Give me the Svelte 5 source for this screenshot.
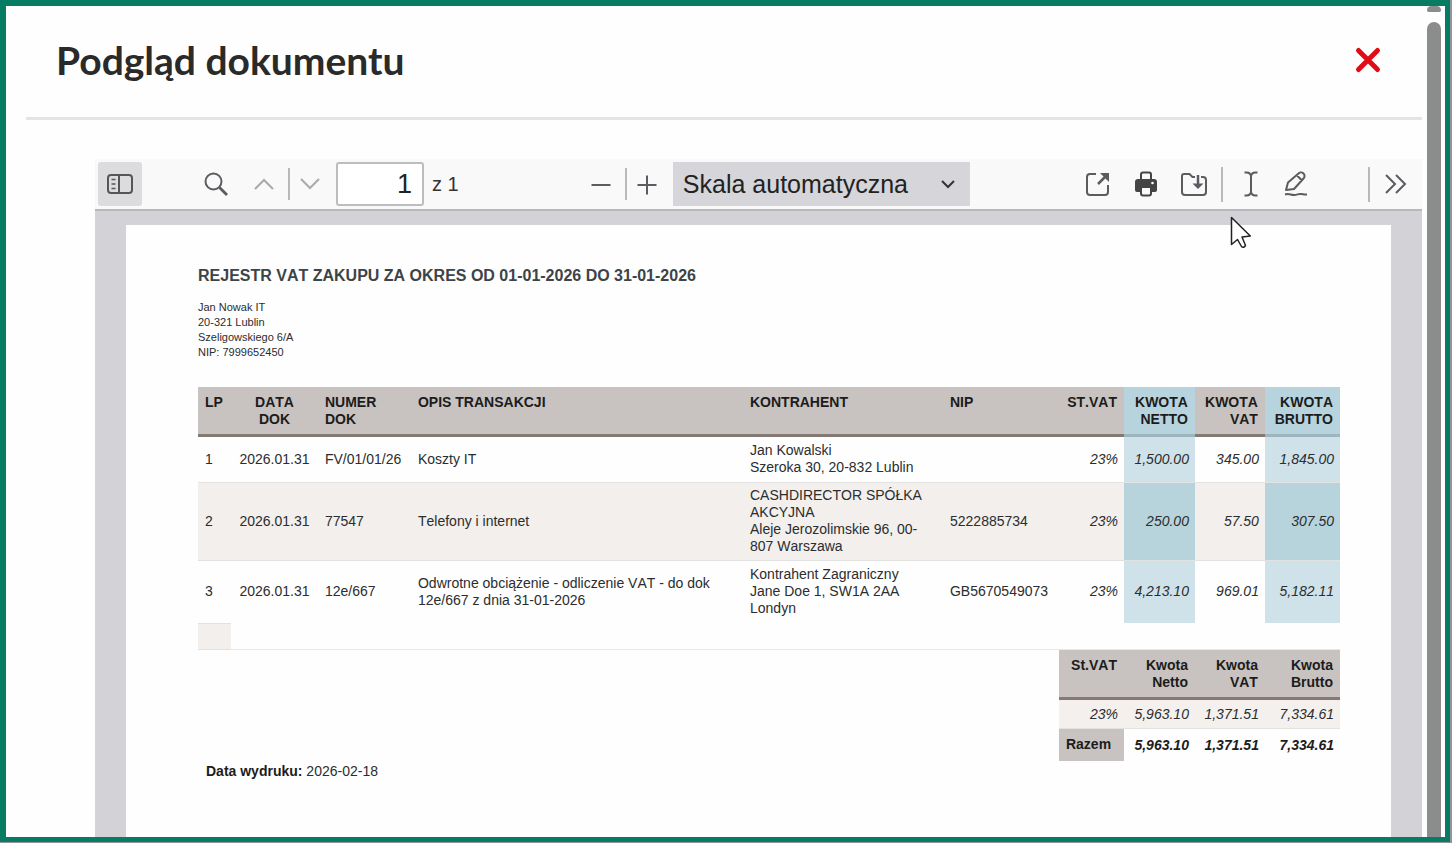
<script lang="ts">
  const rows = [
    { lp: 1, data: '2026.01.31', numer: 'FV/01/01/26', opis: 'Koszty IT', kontrahent: 'Jan Kowalski', adres: 'Szeroka 30, 20-832 Lublin', nip: '', stawka: '23%', netto: '1,500.00', vat: '345.00', brutto: '1,845.00' },
    { lp: 2, data: '2026.01.31', numer: '77547', opis: 'Telefony i internet', kontrahent: 'CASHDIRECTOR SPÓŁKA AKCYJNA', adres: 'Aleje Jerozolimskie 96, 00-807 Warszawa', nip: '5222885734', stawka: '23%', netto: '250.00', vat: '57.50', brutto: '307.50' },
    { lp: 3, data: '2026.01.31', numer: '12e/667', opis: 'Odwrotne obciążenie - odliczenie VAT - do dok 12e/667 z dnia 31-01-2026', kontrahent: 'Kontrahent Zagraniczny', adres: 'Jane Doe 1, SW1A 2AA Londyn', nip: 'GB5670549073', stawka: '23%', netto: '4,213.10', vat: '969.01', brutto: '5,182.11' },
  ];

  // column proportions of the register
  const cols = [33, 87, 93, 332, 200, 116, 65, 71, 70, 75];
  const total = cols.reduce((a, b) => a + b, 0);

  let strona = $state('1');
  let skala = $state('auto');
</script>

<div class="shell">
  <div class="modal" role="dialog" aria-labelledby="modal-title">
    <div class="modal__content">
      <header class="modal__header">
        <h1 id="modal-title">Podgląd dokumentu</h1>
        <button class="close" aria-label="Zamknij">
          <svg width="28" height="28" viewBox="0 0 28 28" fill="none" stroke="#e00d17" stroke-width="5" stroke-linecap="round"><path d="M4.500 4.500 23.500 23.500M23.500 4.500 4.500 23.500"/></svg>
        </button>
      </header>

      <div class="viewer">
        <div class="toolbar">
          <div class="group group--left">
            <button class="tool tool--active" aria-label="Panel boczny">
              <svg width="28" height="28" viewBox="0 0 28 28" fill="none" stroke="#55555a" stroke-width="2"><rect x="2" y="5" width="24" height="18" rx="3"/><path d="M13 5v18"/><path d="M5.500 9.500h4M5.500 14h4M5.500 18.500h4" stroke-width="1.500"/></svg>
            </button>
            <button class="tool tool--search" aria-label="Znajdź">
              <svg width="28" height="28" viewBox="0 0 28 28" fill="none" stroke="#5c5c60" stroke-width="2"><circle cx="11.500" cy="11.500" r="8"/><path d="m17.500 17.500 7.500 7.500" stroke-width="2.800"/></svg>
            </button>
            <button class="tool tool--muted" aria-label="Poprzednia strona">
              <svg width="28" height="28" viewBox="0 0 28 28" fill="none" stroke="currentColor" stroke-width="2"><path d="m5 19 9-9 9 9"/></svg>
            </button>
            <span class="sep"></span>
            <button class="tool tool--muted" aria-label="Następna strona">
              <svg width="28" height="28" viewBox="0 0 28 28" fill="none" stroke="currentColor" stroke-width="2"><path d="m5 9 9 9 9-9"/></svg>
            </button>
            <input class="page-number" type="text" aria-label="Strona" bind:value={strona} />
            <span class="page-count">z 1</span>
          </div>

          <div class="group">
            <button class="tool" aria-label="Pomniejsz">
              <svg width="28" height="28" viewBox="0 0 28 28" fill="none" stroke="currentColor" stroke-width="2"><path d="M4.500 15h19"/></svg>
            </button>
            <span class="sep"></span>
            <button class="tool" aria-label="Powiększ">
              <svg width="28" height="28" viewBox="0 0 28 28" fill="none" stroke="currentColor" stroke-width="2"><path d="M4.500 15h19M14 5.500v19"/></svg>
            </button>
            <div class="scale">
              <select aria-label="Skala" bind:value={skala}>
                <option value="auto">Skala automatyczna</option>
              </select>
              <svg width="16" height="16" viewBox="0 0 16 16" fill="none" stroke="#333" stroke-width="2"><path d="m2 5 6 6 6-6"/></svg>
            </div>
          </div>

          <div class="group">
            <button class="tool" aria-label="Otwórz">
              <svg width="28" height="28" viewBox="0 0 28 28" fill="none" stroke="currentColor" stroke-width="2"><path d="M12 4H6a3 3 0 0 0-3 3v15a3 3 0 0 0 3 3h15a3 3 0 0 0 3-3v-7"/><path d="m14 14 8-8" stroke-width="2.500"/><path d="M16 3h9v9z" fill="currentColor" stroke="none"/></svg>
            </button>
            <button class="tool" aria-label="Drukuj">
              <svg width="28" height="28" viewBox="0 0 28 28"><path d="M9 10V4.500a2 2 0 0 1 2-2h6a2 2 0 0 1 2 2V10" fill="none" stroke="#444" stroke-width="2"/><path d="M6 9h16a3 3 0 0 1 3 3v8a2 2 0 0 1-2 2H5a2 2 0 0 1-2-2v-8a3 3 0 0 1 3-3z" fill="#444"/><path d="M9 17h10v6.500a2 2 0 0 1-2 2h-6a2 2 0 0 1-2-2z" fill="#fafafa" stroke="#444" stroke-width="2"/><circle cx="20.500" cy="13" r="1.300" fill="#fff"/></svg>
            </button>
            <button class="tool" aria-label="Zapisz">
              <svg width="28" height="28" viewBox="0 0 28 28" fill="none" stroke="currentColor" stroke-width="2"><path d="M21 7h2a3 3 0 0 1 3 3v12a3 3 0 0 1-3 3H5a3 3 0 0 1-3-3V6a2 2 0 0 1 2-2h5.500l3 3H15"/><path d="M18 5v9" stroke-width="2.500"/><path d="M12.500 13.500h11L18 19z" fill="currentColor" stroke="none"/></svg>
            </button>
            <span class="sep sep--wide"></span>
            <button class="tool tool--text" aria-label="Tekst">
              <svg width="28" height="28" viewBox="0 0 28 28" fill="none" stroke="currentColor" stroke-width="2"><path d="M14 5v18M7.500 2.500h2A4.500 4.500 0 0 1 14 6a4.500 4.500 0 0 1 4.500-3.500h2M7.500 25.500h2A4.500 4.500 0 0 0 14 22a4.500 4.500 0 0 0 4.500 3.500h2"/></svg>
            </button>
            <button class="tool" aria-label="Rysuj">
              <svg width="28" height="28" viewBox="0 0 28 28" fill="none" stroke="currentColor" stroke-width="2" stroke-linejoin="round"><path d="m4 20 2-7.500L16.500 3.500a3.500 3.500 0 0 1 5 5L12 19zM15 5.500l5 5"/><path d="M3 24.500c4-1.500 6 .8 9.500.5 3-.2 4-1.500 7-1 2 .3 3 .8 5.500.5"/></svg>
            </button>
            <span class="sep sep--more"></span>
            <button class="tool" aria-label="Więcej narzędzi">
              <svg width="28" height="28" viewBox="0 0 28 28" fill="none" stroke="currentColor" stroke-width="2"><path d="m4 5 9 9-9 9M14 5l9 9-9 9"/></svg>
            </button>
          </div>
        </div>

        <div class="canvas">
          <article class="page">
            <h2>REJESTR VAT ZAKUPU ZA OKRES OD 01-01-2026 DO 31-01-2026</h2>
            <address>
              Jan Nowak IT<br />
              20-321 Lublin<br />
              Szeligowskiego 6/A<br />
              NIP: 7999652450
            </address>

            <table>
              <colgroup>
                {#each cols as c}
                  <col style="width: {(c / total) * 100}%" />
                {/each}
              </colgroup>
              <thead>
                <tr>
                  <th>LP</th>
                  <th class="center">DATA<br />DOK</th>
                  <th>NUMER<br />DOK</th>
                  <th>OPIS TRANSAKCJI</th>
                  <th>KONTRAHENT</th>
                  <th>NIP</th>
                  <th class="right">ST.VAT</th>
                  <th class="right blue">KWOTA NETTO</th>
                  <th class="right">KWOTA VAT</th>
                  <th class="right blue">KWOTA BRUTTO</th>
                </tr>
              </thead>
              <tbody>
                {#each rows as row (row.lp)}
                  <tr>
                    <td>{row.lp}</td>
                    <td class="center">{row.data}</td>
                    <td>{row.numer}</td>
                    <td>{row.opis}</td>
                    <td>{row.kontrahent}<br />{row.adres}</td>
                    <td>{row.nip}</td>
                    <td class="num">{row.stawka}</td>
                    <td class="num blue">{row.netto}</td>
                    <td class="num">{row.vat}</td>
                    <td class="num blue">{row.brutto}</td>
                  </tr>
                {/each}
                <tr class="spacer">
                  <td></td>
                  <td colspan="9"></td>
                </tr>
              </tbody>
              <tfoot>
                <tr>
                  <td colspan="6"></td>
                  <th class="right">St.VAT</th>
                  <th class="right">Kwota<br />Netto</th>
                  <th class="right">Kwota<br />VAT</th>
                  <th class="right">Kwota<br />Brutto</th>
                </tr>
                <tr class="rate">
                  <td colspan="6"></td>
                  <td class="num">23%</td>
                  <td class="num">5,963.10</td>
                  <td class="num">1,371.51</td>
                  <td class="num">7,334.61</td>
                </tr>
                <tr class="sum">
                  <td colspan="6"></td>
                  <th>Razem</th>
                  <td class="num">5,963.10</td>
                  <td class="num">1,371.51</td>
                  <td class="num">7,334.61</td>
                </tr>
              </tfoot>
            </table>

            <p class="printed"><b>Data wydruku:</b> 2026-02-18</p>
          </article>
        </div>
      </div>
    </div>

    <div class="scrollbar" aria-hidden="true">
      <span class="scrollbar__arrow"></span>
      <span class="scrollbar__thumb"></span>
    </div>
  </div>

  <svg class="pointer" width="22" height="34" viewBox="0 0 22 34" aria-hidden="true"><path d="M1.500 1.500v27l6-5 4 7q2 2 4-1l-3.500-8.500 8.300-1z" fill="#fff" stroke="#222" stroke-width="1.500" stroke-linejoin="round"/></svg>
</div>

<style>
  :global(body) {
    margin: 0;
    background: #96919a;
  }

  .shell {
    position: relative;
    box-sizing: border-box;
    height: 100vh;
    padding: 0 2px 1px 0;
    overflow: hidden;
    font-family: "Liberation Sans", Arial, sans-serif;
    color: #2b2d2f;
  }
  .modal {
    box-sizing: border-box;
    display: flex;
    height: 100%;
    border: 5px solid #067d62;
    border-width: 6px 5px 5px 6px;
    background: #fefefe;
  }
  .modal__content {
    flex: 1;
    min-width: 0;
    display: flex;
    flex-direction: column;
  }

  .modal__header {
    display: flex;
    align-items: center;
    justify-content: space-between;
    height: 108px;
    margin-left: 20px;
    padding: 0 38px 3px 30px;
    border-bottom: 3px solid #e4e4e4;
  }
  h1 {
    margin: 0;
    font: 700 39px/48px Lato, sans-serif;
    color: #2a2a2a;
  }
  button {
    padding: 0;
    border: 0;
    background: none;
    cursor: pointer;
  }
  .close {
    width: 32px;
    height: 32px;
  }
  svg {
    display: block;
    margin: auto;
  }

  /* PDF viewer */
  .viewer {
    flex: 1;
    min-height: 0;
    display: flex;
    flex-direction: column;
    margin: 39px 0 0 89px;
  }
  .toolbar {
    display: flex;
    justify-content: space-between;
    align-items: center;
    height: 50px;
    padding: 0 4px 0 3px;
    background: #f9f9fa;
    border-bottom: 2px solid #b9b9bb;
  }
  .group {
    display: flex;
    align-items: center;
  }
  .group--left {
    padding-right: 14px;
  }
  .tool {
    width: 44px;
    height: 44px;
    margin-right: 4px;
    color: #5c5c60;
  }
  .tool:last-child {
    margin-right: 0;
  }
  .tool--active {
    background: #dcdcde;
    border-radius: 3px;
  }
  .tool--search {
    margin-left: 48px;
  }
  .tool--muted {
    color: #aaaaad;
  }
  .tool--text {
    margin-right: 1px;
  }
  .sep {
    width: 2px;
    height: 32px;
    margin: 0 -2px 0 -2px;
    background: #b9b9bb;
  }
  .sep--wide {
    height: 35px;
    margin: 0 6px 0 1px;
  }
  .sep--more {
    height: 35px;
    margin: 0 4px 0 46px;
  }
  .page-number {
    box-sizing: border-box;
    width: 88px;
    height: 44px;
    padding: 0 10px;
    border: 2px solid #bdbdbf;
    border-radius: 3px;
    background: #fff;
    font: 27px "Liberation Sans", Arial, sans-serif;
    color: #222;
    text-align: right;
  }
  .page-count {
    margin-left: 8px;
    font-size: 20px;
    color: #333;
  }
  .scale {
    position: relative;
    width: 297px;
  }
  .scale select {
    appearance: none;
    width: 100%;
    height: 44px;
    padding: 0 10px;
    border: 0;
    border-radius: 0;
    background: #d6d5d9;
    font: 25px "Liberation Sans", Arial, sans-serif;
    color: #222;
  }
  .scale svg {
    position: absolute;
    right: 14px;
    top: 14px;
    pointer-events: none;
  }

  .canvas {
    flex: 1;
    min-height: 0;
    overflow: hidden;
    padding: 14px 31px 0;
    background: #d3d2d6;
  }
  .page {
    box-sizing: border-box;
    height: 100%;
    padding: 41px 51px 0 72px;
    background: #fefefe;
    font-kerning: none;
  }
  h2 {
    margin: 0;
    font-size: 16px;
    line-height: 20px;
    color: #3c4447;
  }
  address {
    margin: 14px 0 27px;
    font-size: 11px;
    line-height: 15px;
    font-style: normal;
  }

  /* Register */
  table {
    width: 100%;
    table-layout: fixed;
    border-collapse: separate;
    border-spacing: 0;
    font-size: 14px;
    line-height: 17px;
  }
  th,
  td {
    padding: 5px 7px;
    text-align: left;
    vertical-align: middle;
  }
  tbody td,
  tbody .num {
    padding-bottom: 6px;
  }
  th {
    padding: 7px 7px 6px;
    vertical-align: top;
    background: #c8c3c0;
    border-bottom: 3px solid #857974;
    color: #1c1c1c;
  }
  .center {
    text-align: center;
  }
  .right,
  .num {
    text-align: right;
  }
  .num {
    padding: 5px 6px;
    font-style: italic;
  }
  tbody tr:nth-child(even) td {
    background: #f2efec;
    box-shadow: inset 0 1px #e2e2e0, inset 0 -1px #e2e2e0;
  }
  td.blue {
    background: #cfe2e9;
  }
  th.blue {
    background: #b7d4de;
    border-color: #9db5bd;
  }
  tbody tr:nth-child(even) td.blue {
    background: #b7d4dd;
  }
  tbody .spacer td {
    height: 16px;
  }
  tbody .spacer td + td {
    background: none;
    box-shadow: inset 0 -1px #e6e9ea;
  }
  .rate .num {
    padding: 6px;
    background: #f4f0ed;
    box-shadow: inset 0 -1px #e2e2e0;
  }
  .sum th {
    padding: 7px 7px 8px;
    border: 0;
  }
  .sum .num {
    font-weight: 700;
    color: #1c1c1c;
  }

  .printed {
    margin: 2px 8px;
    font-size: 14px;
    line-height: 17px;
  }
  .printed b {
    color: #1c1c1c;
  }

  .scrollbar {
    display: flex;
    flex-direction: column;
    gap: 10px;
    width: 14px;
    padding: 0 4px 0 5px;
  }
  .scrollbar__arrow {
    height: 6px;
    border-radius: 7px 7px 3px 3px;
    background: #8b8c8c;
  }
  .scrollbar__thumb {
    flex: 1;
    border-radius: 7px 7px 0 0;
    background: #8b8c8c;
  }

  .pointer {
    position: absolute;
    left: 1230px;
    top: 216px;
  }
</style>
